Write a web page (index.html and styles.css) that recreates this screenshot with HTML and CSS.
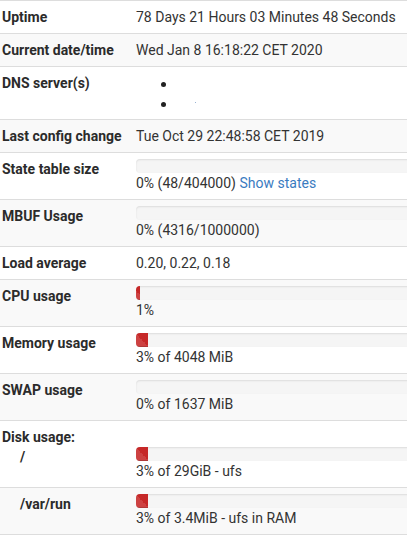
FILE: index.html
```html
<!DOCTYPE html>
<html>
<head>
<meta charset="utf-8">
<link rel="stylesheet" href="styles.css">
</head>
<body>
<div class="widget">
<table class="info">
<colgroup><col class="c-label"><col class="c-value"></colgroup>
<tbody>
<tr><th>Uptime</th><td>78 Days 21 Hours 03 Minutes 48 Seconds</td></tr>
<tr><th>Current date/time</th><td>Wed Jan 8 16:18:22 CET 2020</td></tr>
<tr><th>DNS server(s)</th><td><ul class="dns"><li>&nbsp;</li><li>&nbsp;<span class="dot"></span></li></ul></td></tr>
<tr><th>Last config change</th><td>Tue Oct 29 22:48:58 CET 2019</td></tr>
<tr><th>State table size</th><td><div class="progress"></div>0% (48/404000) <a class="link">Show states</a></td></tr>
<tr><th>MBUF Usage</th><td><div class="progress"></div>0% (4316/1000000)</td></tr>
<tr><th>Load average</th><td>0.20, 0.22, 0.18</td></tr>
<tr><th>CPU usage</th><td><div class="progress"><div class="bar" style="width:1%"></div></div>1%</td></tr>
<tr><th>Memory usage</th><td><div class="progress"><div class="bar" style="width:3%"></div></div>3% of 4048 MiB</td></tr>
<tr><th>SWAP usage</th><td><div class="progress"></div>0% of 1637 MiB</td></tr>
<tr><th><div>Disk usage:</div><div class="sub">/</div></th><td><div class="blank">&nbsp;</div><div class="progress"><div class="bar" style="width:3%"></div></div>3% of 29GiB - ufs</td></tr>
<tr><th><div class="sub">/var/run</div></th><td><div class="progress"><div class="bar" style="width:3%"></div></div>3% of 3.4MiB - ufs in RAM</td></tr>
</tbody>
</table>
</div>
</body>
</html>
```

FILE: styles.css
```css
html, body {
  margin: 0;
  padding: 0;
  background: #fff;
}
body {
  font-family: Roboto, "Liberation Sans", sans-serif;
  font-size: 14px;
  line-height: 20px;
  color: #333;
  overflow: hidden;
  width: 407px;
  height: 536px;
}
.widget {
  margin-left: -4px;
}
.info {
  border-collapse: collapse;
  table-layout: fixed;
  width: 546px;
}
.c-label { width: 134px; }
.info th, .info td {
  border-top: 1px solid #ddd;
  border-bottom: 1px solid #ddd;
  padding: 6px;
  vertical-align: top;
  text-align: left;
}
.info th {
  font-weight: bold;
  color: #2b2b2b;
  white-space: nowrap;
}
.info tr:nth-child(even) th,
.info tr:nth-child(even) td {
  background: #f9f9f9;
}
.dns {
  margin: 0;
  padding-left: 42px;
}
.dns li {
  height: 20px;
  overflow: visible;
}
.dns li::marker {
  font-size: 17px;
  color: #222;
}
.dot {
  display: inline-block;
  width: 1px;
  height: 1px;
  background: #9ab4d4;
  margin-left: 14px;
  vertical-align: 6px;
}
.link {
  color: #3a7bbf;
}
.sub {
  padding-left: 18px;
}
.progress {
  height: 14px;
  background: #f5f5f5;
  border-radius: 4px;
  box-shadow: inset 0 1px 2px rgba(0,0,0,0.1);
  overflow: hidden;
  width: 400px;
}
.bar {
  height: 100%;
  background-color: #c62828;
  background-image: linear-gradient(45deg, rgba(255,255,255,0.12) 50%, transparent 50%);
  box-shadow: inset 0 -1px 0 rgba(0,0,0,0.15);
}
```
